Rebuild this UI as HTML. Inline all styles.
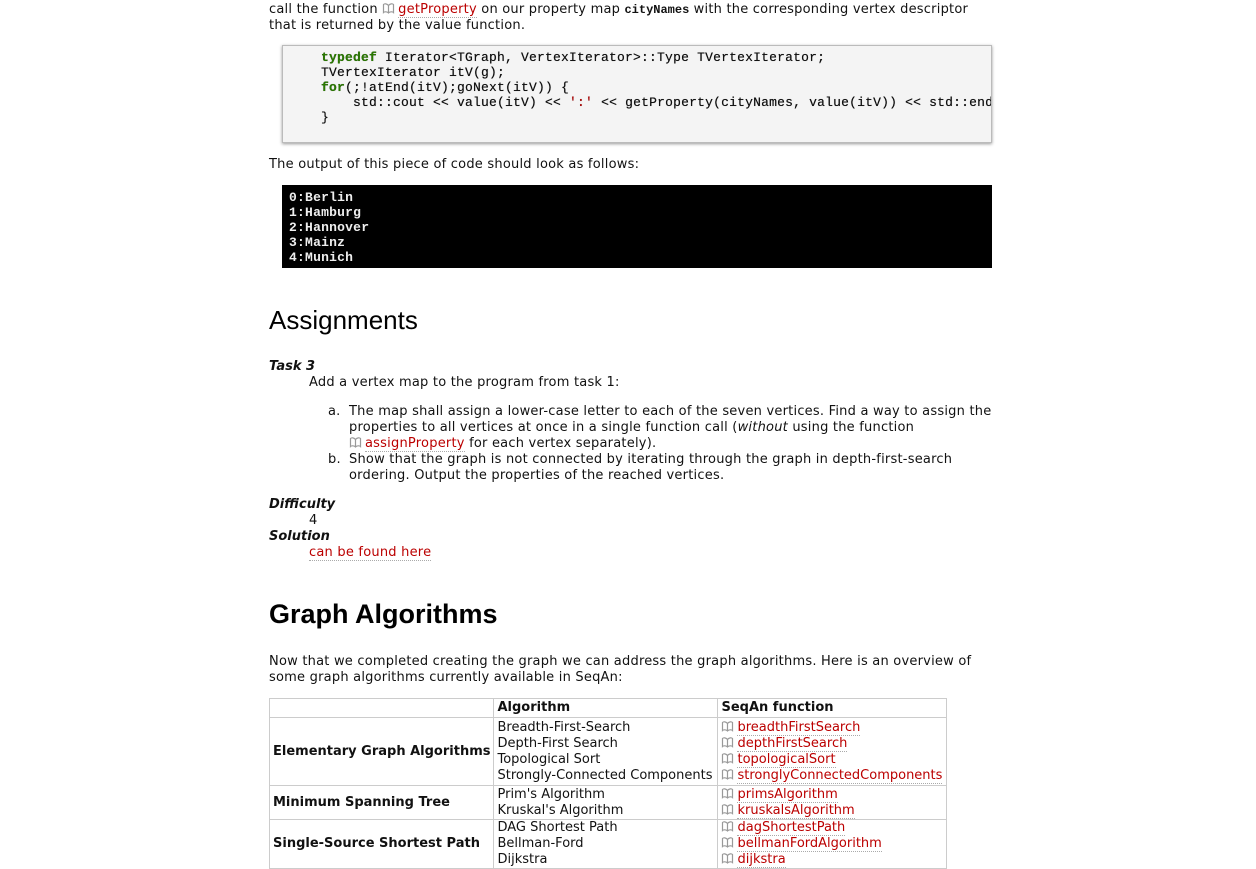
<!DOCTYPE html>
<html><head><meta charset="utf-8"><style>
body{margin:0;background:#fff;width:1256px;height:863px;overflow:hidden;position:relative;font-family:"DejaVu Sans","Liberation Sans",sans-serif;font-size:13px;letter-spacing:0.22px;color:#111}
.a{position:absolute;white-space:nowrap;line-height:16px;margin-top:1px}
.l{color:#b00;border-bottom:1px dotted #aaa}
.bk{display:inline-block;width:13px;height:11px;vertical-align:-1px;margin-right:3px}
code,.m{font-family:"Liberation Mono",monospace}
.code{position:absolute;left:282px;top:45px;width:708px;height:96px;background:#f4f4f4;border:1px solid #bbb;box-shadow:0 1px 3px #999;overflow:hidden}
.code pre{margin:0;position:absolute;left:38px;top:4px;font:13px/15px "Liberation Mono",monospace;letter-spacing:0.2px;color:#111;text-shadow:0 0 0.4px #111}
.kw{color:#2a7a00;font-weight:bold}
.out{position:absolute;left:282px;top:185px;width:710px;height:83px;background:#000}
.out pre{margin:0;position:absolute;left:7px;top:5px;font:bold 13px/15px "Liberation Mono",monospace;color:#eee}
h{position:absolute;font-family:"Liberation Sans",sans-serif;color:#000;white-space:nowrap;letter-spacing:0}
table{position:absolute;left:269px;top:698px;border-collapse:collapse;font-size:13px;letter-spacing:0}
td{border:1px solid #ccc;padding:0 3px;line-height:16px;vertical-align:middle;white-space:nowrap}
td.b{font-weight:bold;letter-spacing:0}
</style></head><body>
<svg width="0" height="0" style="position:absolute"><defs><symbol id="bk" viewBox="0 0 13 11"><path d="M6.5 2.5C5 0.5 2.5 0.5 1.5 1.5V9.5C2.5 8.5 5 8.5 6.5 10 8 8.5 10.5 8.5 11.5 9.5V1.5C10.5 0.5 8 0.5 6.5 2.5ZM6.5 2.5V10" fill="none" stroke="#999" stroke-width="1.2"/></symbol></defs></svg>
<div class="a" style="left:269px;top:1px">call the function <svg class="bk"><use href="#bk"/></svg><span class="l">getProperty</span> on our property map <code style="font-size:12px;font-weight:bold;letter-spacing:0">cityNames</code> with the corresponding vertex descriptor</div>
<div class="a" style="left:269px;top:17px">that is returned by the value function.</div>
<div class="code"><pre><span class="kw">typedef</span> Iterator&lt;TGraph, VertexIterator&gt;::Type TVertexIterator;
TVertexIterator itV(g);
<span class="kw">for</span>(;!atEnd(itV);goNext(itV)) {
    std::cout &lt;&lt; value(itV) &lt;&lt; <span style="color:#b00">':'</span> &lt;&lt; getProperty(cityNames, value(itV)) &lt;&lt; std::endl;
}</pre></div>
<div class="a" style="left:269px;top:156px">The output of this piece of code should look as follows:</div>
<div class="out"><pre>0:Berlin
1:Hamburg
2:Hannover
3:Mainz
4:Munich</pre></div>
<h style="left:269px;top:305px;font-size:26px">Assignments</h>
<div class="a" style="left:269px;top:358px;font-weight:bold;font-style:italic;letter-spacing:0">Task 3</div>
<div class="a" style="left:309px;top:374px">Add a vertex map to the program from task 1:</div>
<div class="a" style="left:328px;top:403px">a.</div>
<div class="a" style="left:349px;top:403px">The map shall assign a lower-case letter to each of the seven vertices. Find a way to assign the</div>
<div class="a" style="left:349px;top:419px">properties to all vertices at once in a single function call (<i>without</i> using the function</div>
<div class="a" style="left:349px;top:435px"><svg class="bk"><use href="#bk"/></svg><span class="l">assignProperty</span> for each vertex separately).</div>
<div class="a" style="left:328px;top:451px">b.</div>
<div class="a" style="left:349px;top:451px">Show that the graph is not connected by iterating through the graph in depth-first-search</div>
<div class="a" style="left:349px;top:467px">ordering. Output the properties of the reached vertices.</div>
<div class="a" style="left:269px;top:496px;font-weight:bold;font-style:italic;letter-spacing:0">Difficulty</div>
<div class="a" style="left:309px;top:512px">4</div>
<div class="a" style="left:269px;top:528px;font-weight:bold;font-style:italic;letter-spacing:0">Solution</div>
<div class="a" style="left:309px;top:544px"><span class="l">can be found here</span></div>
<h style="left:269px;top:599px;font-size:27px;font-weight:bold">Graph Algorithms</h>
<div class="a" style="left:269px;top:653px">Now that we completed creating the graph we can address the graph algorithms. Here is an overview of</div>
<div class="a" style="left:269px;top:669px">some graph algorithms currently available in SeqAn:</div>
<table>
<tr style="height:19px"><td class="b" style="width:215px"></td><td class="b" style="width:217px">Algorithm</td><td class="b" style="width:222px">SeqAn function</td></tr>
<tr style="height:68px"><td class="b">Elementary Graph Algorithms</td><td>Breadth-First-Search<br>Depth-First Search<br>Topological Sort<br>Strongly-Connected Components</td><td><svg class="bk"><use href="#bk"/></svg><span class="l">breadthFirstSearch</span><br><svg class="bk"><use href="#bk"/></svg><span class="l">depthFirstSearch</span><br><svg class="bk"><use href="#bk"/></svg><span class="l">topologicalSort</span><br><svg class="bk"><use href="#bk"/></svg><span class="l">stronglyConnectedComponents</span></td></tr>
<tr style="height:34px"><td class="b">Minimum Spanning Tree</td><td>Prim's Algorithm<br>Kruskal's Algorithm</td><td><svg class="bk"><use href="#bk"/></svg><span class="l">primsAlgorithm</span><br><svg class="bk"><use href="#bk"/></svg><span class="l">kruskalsAlgorithm</span></td></tr>
<tr><td class="b">Single-Source Shortest Path</td><td>DAG Shortest Path<br>Bellman-Ford<br>Dijkstra</td><td><svg class="bk"><use href="#bk"/></svg><span class="l">dagShortestPath</span><br><svg class="bk"><use href="#bk"/></svg><span class="l">bellmanFordAlgorithm</span><br><svg class="bk"><use href="#bk"/></svg><span class="l">dijkstra</span></td></tr>
</table>
</body></html>
